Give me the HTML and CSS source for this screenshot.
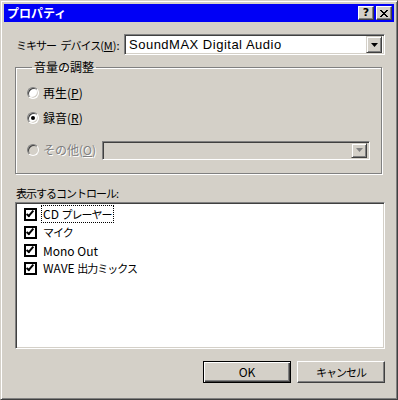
FILE: index.html
```html
<!DOCTYPE html>
<html lang="ja">
<head>
<meta charset="utf-8">
<link rel="stylesheet" href="styles.css">
</head>
<body>
<div class="window">
  <div class="titlebar">
    <span class="title">プロパティ</span>
    <div class="caption-btns">
      <span class="cbtn help">?</span>
      <span class="cbtn close"><svg width="8" height="7" viewBox="0 0 8 7"><path d="M0 0h2v1h1v1h2v-1h1v-1h2v1h-1v1h-1v1h-1v1h1v1h1v1h1v1h-2v-1h-1v-1h-2v1h-1v1h-2v-1h1v-1h1v-1h1v-1h-1v-1h-1v-1h-1z" fill="#000"/></svg></span>
    </div>
  </div>
  <div class="content">
    <div class="mixer-row">
      <span class="label"><span class="kana">ミキサー デバイス</span>(<u>M</u>):</span>
      <div class="combo">
        <span class="combo-text">SoundMAX Digital Audio</span>
        <span class="drop"><svg width="7" height="4" viewBox="0 0 7 4"><path d="M0 0h7L3.5 4z" fill="#000"/></svg></span>
      </div>
    </div>
    <fieldset class="group">
      <legend>音量の調整</legend>
      <div class="radio-row"><span class="radio"></span><span>再生(<u>P</u>)</span></div>
      <div class="radio-row"><span class="radio checked"></span><span>録音(<u>R</u>)</span></div>
      <div class="radio-row disabled"><span class="radio"></span><span class="dtext">その他(<u>O</u>)</span>
        <div class="combo dis">
          <span class="combo-text"></span>
          <span class="drop"><svg width="7" height="4" viewBox="0 0 7 4"><path d="M0 0h7L3.5 4z" fill="#808080"/></svg></span>
        </div>
      </div>
    </fieldset>
    <div class="list-label kana">表示するコントロール:</div>
    <div class="listbox">
      <div class="item"><span class="check"></span><span class="itext focus">CD <span class="kana">プレーヤー</span></span></div>
      <div class="item"><span class="check"></span><span class="itext kana">マイク</span></div>
      <div class="item"><span class="check"></span><span class="itext">Mono Out</span></div>
      <div class="item"><span class="check"></span><span class="itext">WAVE <span class="kana">出力ミックス</span></span></div>
    </div>
    <div class="buttons">
      <span class="btn default">OK</span>
      <span class="btn"><span class="kana">キャンセル</span></span>
    </div>
  </div>
</div>
</body>
</html>
```
FILE: styles.css
```css
html, body { margin: 0; padding: 0; background: #d4d0c8; }
body {
  font-family: "Noto Sans CJK JP", "DejaVu Sans", sans-serif;
  font-size: 12px;
  line-height: 14px;
  color: #000;
}
.kana {
  font-size: 11px;
  letter-spacing: -1px;
}
.window {
  width: 398px;
  height: 400px;
  box-sizing: border-box;
  background: #d4d0c8;
  border-top: 1px solid #d4d0c8;
  border-left: 1px solid #d4d0c8;
  border-right: 1px solid #404040;
  border-bottom: 1px solid #404040;
  box-shadow: inset 1px 1px 0 #fff, inset -1px -1px 0 #808080;
  padding: 3px;
  display: flex;
  flex-direction: column;
}
.titlebar {
  height: 18px;
  flex: none;
  background: #0000f6;
  display: flex;
  align-items: center;
  justify-content: space-between;
  padding: 0 2px 0 3px;
}
.title {
  color: #fff;
  font-weight: bold;
  font-size: 12px;
  line-height: 18px;
}
.caption-btns { display: flex; gap: 2px; }
.cbtn {
  width: 16px;
  height: 14px;
  box-sizing: border-box;
  background: #d4d0c8;
  border-top: 1px solid #fff;
  border-left: 1px solid #fff;
  border-right: 1px solid #404040;
  border-bottom: 1px solid #404040;
  box-shadow: inset -1px -1px 0 #808080;
  display: flex;
  align-items: center;
  justify-content: center;
  font-family: "DejaVu Sans", sans-serif;
  font-weight: bold;
  font-size: 11px;
  line-height: 12px;
}
.content {
  flex: 1;
  padding: 12px 9px 0 11px;
  display: flex;
  flex-direction: column;
}
.mixer-row {
  display: flex;
  align-items: center;
  justify-content: space-between;
  height: 21px;
}
.label { padding-left: 1px; white-space: nowrap; font-size: 11px; word-spacing: 3px; }
.combo {
  flex: none;
  width: 261px;
  height: 21px;
  box-sizing: border-box;
  background: #fff;
  border-top: 1px solid #808080;
  border-left: 1px solid #808080;
  border-right: 1px solid #fff;
  border-bottom: 1px solid #fff;
  box-shadow: inset 1px 1px 0 #404040, inset -1px -1px 0 #d4d0c8;
  display: flex;
  align-items: center;
  padding: 2px;
}
.combo-text {
  flex: 1;
  padding-left: 2px;
  font-family: "Liberation Sans", "Noto Sans CJK JP", sans-serif;
  font-size: 13px;
  letter-spacing: 0.5px;
}
.drop {
  width: 16px;
  height: 17px;
  box-sizing: border-box;
  background: #d4d0c8;
  border-top: 1px solid #d4d0c8;
  border-left: 1px solid #d4d0c8;
  border-right: 1px solid #404040;
  border-bottom: 1px solid #404040;
  box-shadow: inset 1px 1px 0 #fff, inset -1px -1px 0 #808080;
  display: flex;
  align-items: center;
  justify-content: center;
}
.group {
  margin: 5px 0 0 0;
  padding: 9px 0 0 11px;
  height: 114px;
  width: 367px;
  box-sizing: border-box;
  border: 1px solid #808080;
  box-shadow: 1px 1px 0 #fff, inset 1px 1px 0 #fff;
  display: flex;
  flex-direction: column;
}
.group legend {
  padding: 0 2px;
  margin-left: 5px;
  line-height: 14px;
}
.radio-row {
  display: flex;
  align-items: center;
  gap: 4px;
  height: 20px;
  margin-bottom: 5px;
}
.radio-row.disabled { margin-top: 7px; }
.radio {
  width: 12px;
  height: 12px;
  border-radius: 50%;
  box-sizing: border-box;
  background: #fff;
  border: 1px solid;
  border-color: #808080 #fff #fff #808080;
  box-shadow: inset 1px 1px 0 #404040, inset -1px -1px 0 #d4d0c8;
  position: relative;
  flex: none;
}
.radio.checked::after {
  content: "";
  position: absolute;
  left: 3px;
  top: 3px;
  width: 4px;
  height: 4px;
  border-radius: 50%;
  background: #000;
}
.disabled .radio { background: #d4d0c8; }
.dtext { color: #808080; text-shadow: 1px 1px 0 #fff; }
.combo.dis {
  width: 268px;
  height: 19px;
  margin-left: 2px;
  background: #d4d0c8;
}
.combo.dis .drop { height: 15px; }
.list-label {
  margin-top: 11px;
  line-height: 16px;
  padding-left: 1px;
}
.listbox {
  margin-top: 1px;
  width: 370px;
  height: 147px;
  box-sizing: border-box;
  background: #fff;
  border-top: 1px solid #808080;
  border-left: 1px solid #808080;
  border-right: 1px solid #fff;
  border-bottom: 1px solid #fff;
  box-shadow: inset 1px 1px 0 #404040, inset -1px -1px 0 #d4d0c8;
  padding: 2px 2px 2px 8px;
}
.item {
  display: flex;
  align-items: center;
  height: 18px;
  gap: 4px;
}
.check {
  width: 9px;
  height: 9px;
  border: 2px solid #000;
  background: #fff;
  position: relative;
  flex: none;
}
.check::after {
  content: "";
  position: absolute;
  left: 2px;
  top: -1px;
  width: 2px;
  height: 6px;
  border-right: 2px solid #000;
  border-bottom: 2px solid #000;
  transform: rotate(40deg);
}
.itext { padding: 0 1px; line-height: 15px; border: 1px solid transparent; }
.itext.focus { border: 1px dotted #000; }
.buttons {
  margin-top: 12px;
  display: flex;
  justify-content: flex-end;
  gap: 6px;
}
.btn {
  width: 88px;
  height: 22px;
  box-sizing: border-box;
  border-top: 1px solid #fff;
  border-left: 1px solid #fff;
  border-right: 1px solid #404040;
  border-bottom: 1px solid #404040;
  box-shadow: inset -1px -1px 0 #808080;
  display: flex;
  align-items: center;
  justify-content: center;
}
.btn.default {
  border: 1px solid #000;
  box-shadow: inset 1px 1px 0 #fff, inset -1px -1px 0 #404040, inset -2px -2px 0 #808080;
}
```
